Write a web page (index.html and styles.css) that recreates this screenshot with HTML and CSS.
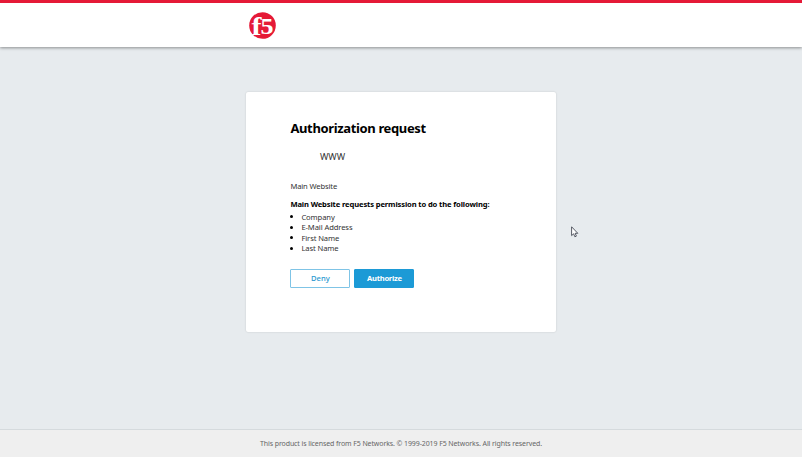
FILE: index.html
```html
<!DOCTYPE html>
<html lang="en">
<head>
<meta charset="utf-8">
<title>Authorization request</title>
<link rel="stylesheet" href="styles.css">
</head>
<body>
<header class="header">
  <svg class="logo" viewBox="0 0 27 27" role="img" aria-label="F5">
    <circle cx="13.5" cy="13.5" r="13.3" fill="#e51937"/>
    <text class="logo-f" x="2.5" y="22.5" textLength="10" lengthAdjust="spacingAndGlyphs">f</text>
    <text class="logo-5" x="11.5" y="22" textLength="13" lengthAdjust="spacingAndGlyphs">5</text>
  </svg>
</header>
<main class="main">
  <section class="card">
    <h1 class="title">Authorization request</h1>
    <div class="app">WWW</div>
    <p class="description">Main Website</p>
    <p class="request">Main Website requests permission to do the following:</p>
    <ul class="scopes">
      <li>Company</li>
      <li>E-Mail Address</li>
      <li>First Name</li>
      <li>Last Name</li>
    </ul>
    <div class="actions">
      <button class="button">Deny</button>
      <button class="button primary">Authorize</button>
    </div>
  </section>
</main>
<footer class="footer">This product is licensed from F5 Networks. © 1999-2019 F5 Networks. All rights reserved.</footer>
<svg class="cursor" viewBox="0 0 8 12"><path d="M.6.8v8.8l2-1.8 1.3 3 1.5-.7-1.3-2.8h2.7z" fill="#fff" stroke="#454955" stroke-width=".9"/></svg>
</body>
</html>
```
FILE: styles.css
```css
* { box-sizing: border-box; }
body {
  margin: 0;
  height: 457px;
  display: flex;
  flex-direction: column;
  overflow: hidden;
  background: #e7ebee;
  color: #333;
  font: 7.6px/10.5px "Noto Sans", "Open Sans", sans-serif;
  letter-spacing: -.13px;
}
.header {
  height: 47px;
  flex: none;
  border-top: 3px solid #e51937;
  background: #fff;
  box-shadow: 0 1px 3px rgba(0, 0, 0, .4);
  padding: 9px 0 0 249px;
}
.logo { display: block; width: 27px; height: 27px; overflow: visible; }
.logo text { fill: #fff; font-family: "Liberation Serif", serif; font-weight: bold; letter-spacing: 0; }
.logo-f { font-size: 25px; }
.logo-5 { font-size: 24px; }
.main { flex: 1; padding-top: 45px; }
.card {
  width: 310px;
  height: 240px;
  margin-left: 246.4px;
  padding: 26.5px 44px 0;
  background: #fff;
  border-radius: 2px;
  box-shadow: 0 0 2px rgba(0, 0, 0, .16);
}
.title { margin: 0; color: #000; font-size: 13px; line-height: 18px; font-weight: 700; letter-spacing: -.36px; }
.app { margin: 14.5px 0 0 29.5px; font-size: 9px; line-height: 12px; letter-spacing: 0; }
.description { margin: 18px 0 0; }
.request { margin: 7.5px 0 0; color: #000; font-weight: 700; letter-spacing: -.13px; }
.scopes { margin: 2px 0 0; padding: 0; list-style: none; }
.scopes li { display: flex; align-items: center; height: 10.5px; letter-spacing: -.1px; }
.scopes li::before { content: ""; width: 3px; height: 3px; margin-right: 8px; border-radius: 50%; background: #000; }
.actions { display: flex; gap: 4px; margin: 15px 0 0; }
.button {
  width: 60px;
  height: 19px;
  padding: 0;
  border: 1px solid #7fc4e6;
  border-radius: 1px;
  background: #fff;
  color: #2b99d0;
  font: 500 7.6px/17px "Noto Sans", "Open Sans", sans-serif;
  letter-spacing: 0;
}
.primary { border-color: #1c9ad6; background: #1c9ad6; color: #fff; font-weight: 700; letter-spacing: -.25px; }
.footer {
  height: 28px;
  flex: none;
  border-top: 1px solid #d5dadd;
  background: #efefef;
  color: #666;
  text-align: center;
  font-size: 7px;
  line-height: 28px;
  letter-spacing: -.1px;
}
.cursor { position: absolute; left: 571px; top: 226px; width: 8px; height: 12px; }
```
